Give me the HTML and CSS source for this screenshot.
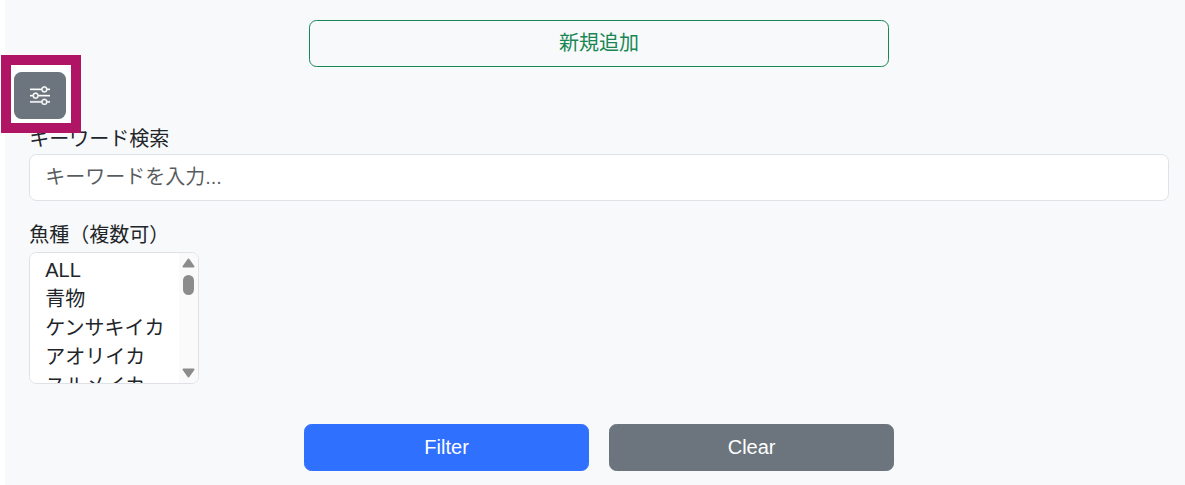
FILE: index.html
```html
<!DOCTYPE html>
<html lang="ja">
<head>
<meta charset="utf-8">
<title>釣果検索</title>
<link rel="stylesheet" href="styles.css">
</head>
<body>
<main class="page">
  <div class="add-row"><button class="btn btn-add" type="button">新規追加</button></div>
  <div class="toggle-row">
    <button class="btn btn-toggle" type="button" aria-label="フィルター">
      <svg class="icon" viewBox="0 0 16 16" fill="currentColor"><path fill-rule="evenodd" d="M11.5 2a1.5 1.5 0 1 0 0 3 1.5 1.5 0 0 0 0-3zM9.05 3a2.5 2.5 0 0 1 4.9 0H16v1h-2.05a2.5 2.5 0 0 1-4.9 0H0V3h9.05zM4.5 7a1.5 1.5 0 1 0 0 3 1.5 1.5 0 0 0 0-3zM2.05 8a2.5 2.5 0 0 1 4.9 0H16v1H6.95a2.5 2.5 0 0 1-4.9 0H0V8h2.05zm9.45 4a1.5 1.5 0 1 0 0 3 1.5 1.5 0 0 0 0-3zm-2.45 1a2.5 2.5 0 0 1 4.9 0H16v1h-2.05a2.5 2.5 0 0 1-4.9 0H0v-1h9.05z"/></svg>
    </button>
  </div>
  <form class="filters">
    <div class="field">
      <label class="label" for="kw">キーワード検索</label>
      <input class="control" id="kw" type="text" placeholder="キーワードを入力...">
    </div>
    <div class="field field-fish">
      <label class="label" for="fish">魚種（複数可）</label>
      <div class="listbox-wrap">
        <select class="listbox" id="fish" multiple>
          <option>ALL</option><option>青物</option><option>ケンサキイカ</option><option>アオリイカ</option><option>スルメイカ</option>
          <option>ヒラメ</option><option>マダイ</option><option>チヌ</option><option>シーバス</option><option>アジ</option>
          <option>サバ</option><option>イワシ</option><option>メバル</option><option>カサゴ</option><option>タチウオ</option>
          <option>ブリ</option><option>カンパチ</option><option>サワラ</option><option>キス</option><option>カワハギ</option>
        </select>
        <div class="rail" aria-hidden="true">
          <svg class="arrow" viewBox="0 0 13 10"><path d="M6.5 1.5 L11.5 8.5 H1.5 Z"/></svg>
          <div class="thumb"></div>
          <svg class="arrow arrow-down" viewBox="0 0 13 10"><path d="M1.5 1.5 H11.5 L6.5 8.5 Z"/></svg>
        </div>
      </div>
    </div>
    <div class="actions">
      <button class="btn btn-filter" type="button">Filter</button>
      <button class="btn btn-clear" type="button">Clear</button>
    </div>
  </form>
  <div class="highlight" aria-hidden="true"></div>
</main>
</body>
</html>
```
FILE: styles.css
```css
* { box-sizing: border-box; }
html, body { margin: 0; height: 100%; overflow: hidden; background: #fff; }
body {
  font-family: "Liberation Sans", "Noto Sans CJK JP", sans-serif;
  font-size: 20px;
  line-height: 1.5;
  color: #212529;
}
.page {
  position: relative;
  margin-left: 5px;
  height: 485px;
  padding: 20px 16px 0 24.2px;
  background: #f8f9fa;
}
.btn {
  height: 47px;
  border: 1px solid transparent;
  border-radius: 7.5px;
  font: inherit;
  padding: 0 15px 1px;
}
.add-row { display: flex; justify-content: center; }
.btn-add { width: 580px; background: transparent; border-color: #198754; color: #198754; }
.toggle-row { display: flex; margin: 5px 0 5px -15.2px; }
.btn-toggle {
  position: relative;
  z-index: 2;
  width: 52px;
  background: #6c757d;
  color: #fff;
  padding: 0 0 1px;
  display: flex;
  align-items: center;
  justify-content: center;
}
.icon { width: 20px; height: 20px; display: block; stroke: currentColor; stroke-width: 0.3; }
.label { display: block; }
.control {
  display: block;
  width: 100%;
  height: 47px;
  padding: 0 15px;
  font: inherit;
  color: #212529;
  background: #fff;
  border: 1px solid #dee2e6;
  border-radius: 7.5px;
}
.control::placeholder { color: rgba(33, 37, 41, 0.75); opacity: 1; }
.field-fish { margin-top: 19px; }
.listbox-wrap {
  position: relative;
  width: 169.8px;
  height: 132px;
  margin-top: 2px;
}
.listbox {
  display: block;
  width: 100%;
  height: 100%;
  padding: 6px 0 6px 15px;
  font: inherit;
  color: #212529;
  background: #fff;
  border: 1px solid #dee2e6;
  border-radius: 7.5px;
}
.listbox option { padding: 0; }
.rail {
  position: absolute;
  top: 1px;
  right: 1px;
  bottom: 1px;
  width: 19px;
  padding: 5px 3px;
  display: flex;
  flex-direction: column;
  align-items: center;
  background: #fafafa;
  border-radius: 0 6.5px 6.5px 0;
}
.arrow { width: 13px; height: 10px; display: block; flex: none; fill: #8c8c8c; stroke: #8c8c8c; stroke-width: 2; stroke-linejoin: round; }
.arrow-down { margin-top: auto; }
.thumb { width: 11px; height: 20px; margin-top: 7px; background: #8c8c8c; border-radius: 5.5px; }
.actions { display: flex; justify-content: center; gap: 20px; margin-top: 40px; }
.btn-filter { width: 285px; background: #3070ff; border-color: #3070ff; color: #fff; }
.btn-clear { width: 285px; background: #6c757d; border-color: #6c757d; color: #fff; }
.highlight {
  position: absolute;
  z-index: 1;
  left: -4px;
  top: 55px;
  width: 80px;
  height: 78px;
  border: 10px solid #b01464;
  background: #fff;
  pointer-events: none;
}
```
